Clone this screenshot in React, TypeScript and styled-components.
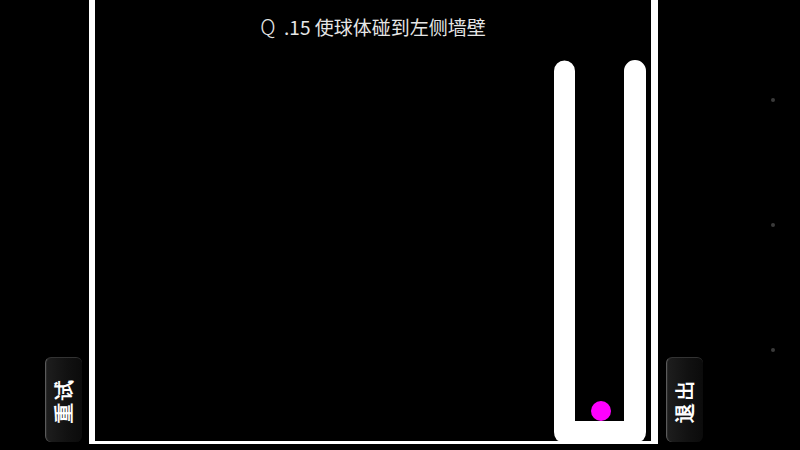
import styled, { createGlobalStyle } from "styled-components";

const GlobalStyle = createGlobalStyle`
  html, body {
    margin: 0;
    padding: 0;
    background: #000;
    overflow: hidden;
  }
  * {
    box-sizing: border-box;
  }
`;

const Screen = styled.div`
  display: flex;
  width: 800px;
  height: 450px;
  background: #000;
  font-family: "Noto Sans CJK SC", "Noto Sans", sans-serif;
`;

const SideColumn = styled.div<{ $side: "left" | "right" }>`
  display: flex;
  align-items: flex-end;
  justify-content: ${(p) => (p.$side === "left" ? "flex-end" : "flex-start")};
  width: ${(p) => (p.$side === "left" ? "89px" : "142px")};
  padding: 0 ${(p) => (p.$side === "left" ? "7px" : "0")} 8px
    ${(p) => (p.$side === "left" ? "0" : "8px")};
  position: relative;
`;

const SideButton = styled.button`
  display: flex;
  align-items: center;
  justify-content: center;
  width: 37px;
  height: 85px;
  padding: 0;
  border: none;
  border-left: 1px solid #5a5a5a;
  border-top: 1px solid #333;
  border-radius: 6px;
  background: linear-gradient(90deg, #1e1e1e 0%, #111 60%, #0b0b0b 100%);
  box-shadow: inset 1px 0 0 #2a2a2a;
  cursor: pointer;
`;

const ButtonLabel = styled.span`
  display: inline-block;
  transform: rotate(-90deg);
  white-space: nowrap;
  color: #fff;
  font-size: 20px;
  font-weight: 700;
  letter-spacing: 3px;
  line-height: 1;
`;

const NavDots = styled.div`
  position: absolute;
  left: 113px;
  top: 98px;
  display: flex;
  flex-direction: column;
  gap: 121px;
`;

const NavDot = styled.span`
  display: block;
  width: 4px;
  height: 4px;
  border-radius: 50%;
  background: #3a3a3a;
`;

const Frame = styled.div`
  width: 569px;
  height: 444px;
  border-left: 6px solid #fff;
  border-right: 7px solid #fff;
  border-bottom: 3px solid #fff;
  display: flex;
  flex-direction: column;
`;

const Title = styled.div`
  padding-top: 12px;
  text-align: center;
  color: #e6e6e6;
  font-size: 19px;
  line-height: 28px;
  white-space: nowrap;
`;

const QuestionMark = styled.span`
  font-size: 21px;
  font-weight: 300;
`;

const Playfield = styled.div`
  position: relative;
  flex: 1;
`;

const Cup = styled.svg`
  position: absolute;
  left: 459px;
  top: 19px;
`;

const Ball = styled.div`
  position: absolute;
  left: 496px;
  top: 360px;
  width: 20px;
  height: 20px;
  border-radius: 50%;
  background: #ff00ff;
`;

export default function App() {
  return (
    <>
      <GlobalStyle />
      <Screen>
        <SideColumn $side="left">
          <SideButton>
            <ButtonLabel>重试</ButtonLabel>
          </SideButton>
        </SideColumn>
        <Frame>
          <Title>
            <QuestionMark>Q</QuestionMark>&nbsp;&nbsp;.15 使球体碰到左侧墙壁
          </Title>
          <Playfield>
            <Cup width="92" height="382" viewBox="0 0 92 382">
              <path
                d="M0 11 A10.5 10.5 0 0 1 21 11 V361 H70 V11 A11 11 0 0 1 92 11 V372 Q92 382 82 382 H10 Q0 382 0 372 Z"
                fill="#fff"
              />
            </Cup>
            <Ball />
          </Playfield>
        </Frame>
        <SideColumn $side="right">
          <SideButton>
            <ButtonLabel>退出</ButtonLabel>
          </SideButton>
          <NavDots>
            <NavDot />
            <NavDot />
            <NavDot />
          </NavDots>
        </SideColumn>
      </Screen>
    </>
  );
}
